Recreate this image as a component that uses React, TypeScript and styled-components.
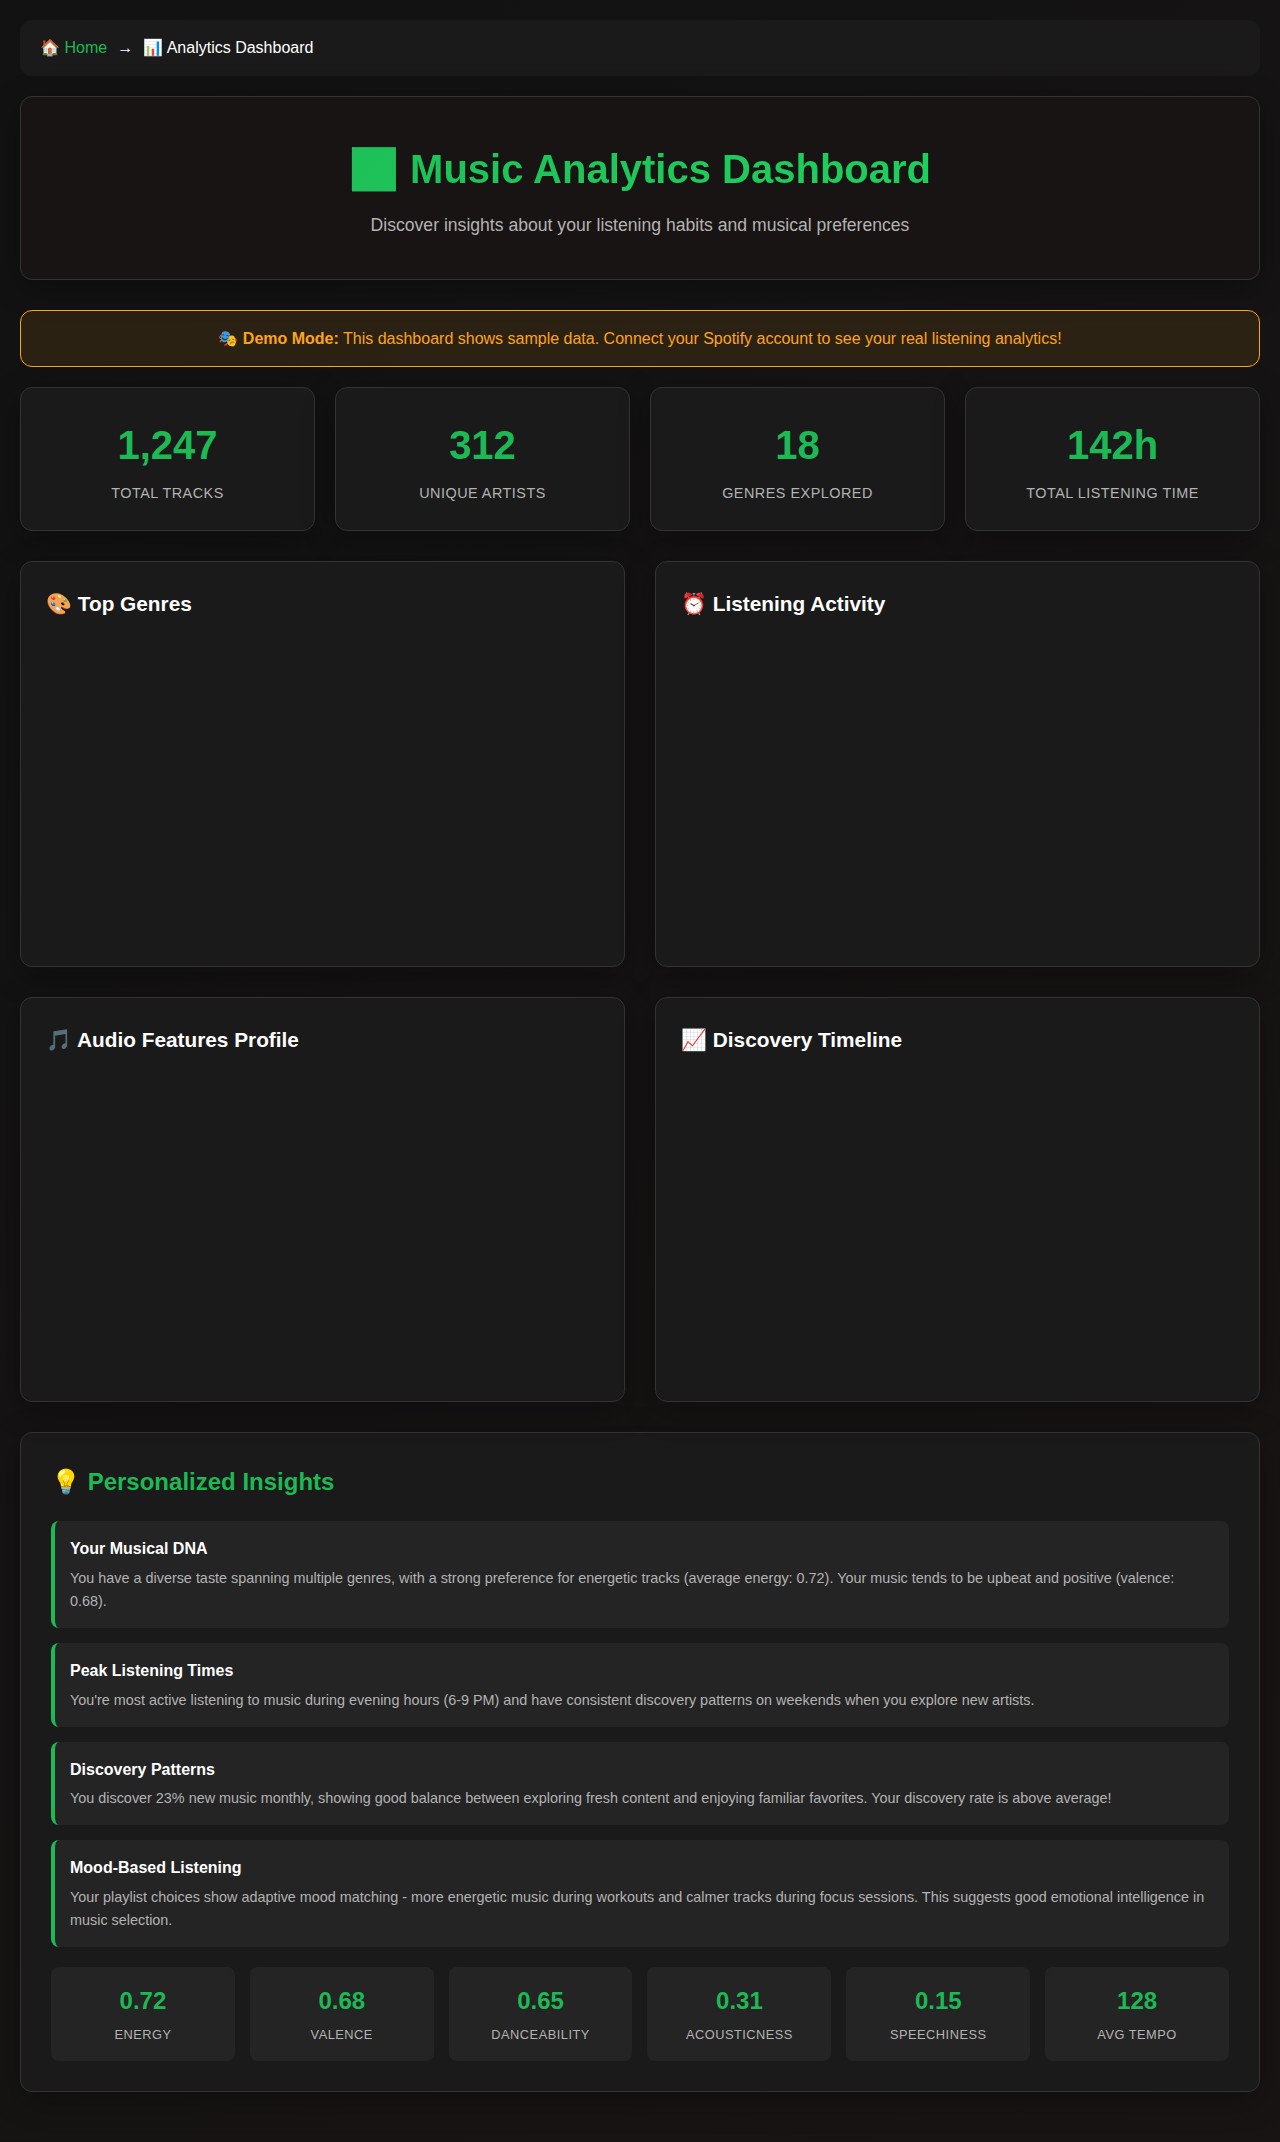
import React from "react";
import styled, { createGlobalStyle, css } from "styled-components";

const GlobalStyle = createGlobalStyle`
  * {
    margin: 0;
    padding: 0;
    box-sizing: border-box;
  }

  body {
    font-family: "Liberation Sans", Arial, sans-serif;
    font-size: 16px;
    line-height: 1.6;
    color: #ffffff;
    min-height: 100vh;
    background: linear-gradient(135deg, #121212 0%, #191414 100%);
  }
`;

const surface = css`
  background: #1a1a1a;
  border: 1px solid #333333;
  border-radius: 12px;
  box-shadow: 0 8px 32px rgba(0, 0, 0, 0.3);
`;

const Container = styled.div`
  max-width: 1400px;
  margin: 0 auto;
  padding: 20px 20px 50px;
`;

const Breadcrumb = styled.nav`
  display: flex;
  align-items: center;
  gap: 10px;
  padding: 15px 20px;
  margin-bottom: 20px;
  background: #1a1a1a;
  border-radius: 12px;
`;

const HomeLink = styled.a`
  color: #1db954;
  text-decoration: none;
`;

const Header = styled.header`
  ${surface}
  background: #191414;
  padding: 40px;
  margin-bottom: 30px;
  text-align: center;
`;

const Title = styled.h1`
  font-size: 40px;
  font-weight: 700;
  margin-bottom: 10px;
  background: linear-gradient(135deg, #1db954, #1ed760);
  -webkit-background-clip: text;
  background-clip: text;
  -webkit-text-fill-color: transparent;
`;

const Subtitle = styled.p`
  font-size: 17.6px;
  color: #b3b3b3;
`;

const Notice = styled.div`
  padding: 15px;
  margin-bottom: 20px;
  text-align: center;
  color: #ffa31a;
  background: rgba(255, 163, 26, 0.1);
  border: 1px solid #ffa31a;
  border-radius: 12px;
`;

const Stats = styled.section`
  display: grid;
  grid-template-columns: repeat(4, 1fr);
  gap: 20px;
  margin-bottom: 30px;
`;

const StatCard = styled.div`
  ${surface}
  padding: 25px;
  text-align: center;
`;

const StatValue = styled.div`
  font-size: 40px;
  font-weight: 700;
  color: #1db954;
  margin-bottom: 5px;
`;

const StatLabel = styled.div`
  font-size: 14.4px;
  letter-spacing: 0.5px;
  text-transform: uppercase;
  color: #b3b3b3;
`;

const Charts = styled.section`
  display: grid;
  grid-template-columns: repeat(2, 1fr);
  gap: 30px;
  margin-bottom: 30px;
`;

const ChartCard = styled.div`
  ${surface}
  padding: 25px;
`;

const ChartTitle = styled.h3`
  font-size: 20.8px;
  font-weight: 700;
  margin-bottom: 20px;
`;

const ChartArea = styled.div`
  height: 300px;
`;

const Insights = styled.section`
  ${surface}
  padding: 30px;
`;

const InsightsTitle = styled.h2`
  font-size: 24px;
  font-weight: 700;
  color: #1db954;
  margin-bottom: 20px;
`;

const InsightList = styled.div`
  display: flex;
  flex-direction: column;
  gap: 15px;
`;

const Insight = styled.article`
  padding: 15px;
  background: #242424;
  border-left: 4px solid #1db954;
  border-radius: 8px;
`;

const InsightTitle = styled.h4`
  font-size: 16px;
  font-weight: 700;
  margin-bottom: 5px;
`;

const InsightText = styled.p`
  font-size: 14.4px;
  color: #b3b3b3;
`;

const Features = styled.div`
  display: grid;
  grid-template-columns: repeat(6, 1fr);
  gap: 15px;
  margin-top: 20px;
`;

const Feature = styled.div`
  padding: 15px;
  text-align: center;
  background: #242424;
  border-radius: 8px;
`;

const FeatureValue = styled.div`
  font-size: 24px;
  font-weight: 700;
  color: #1db954;
  margin-bottom: 5px;
`;

const FeatureLabel = styled.div`
  font-size: 12.8px;
  letter-spacing: 0.5px;
  text-transform: uppercase;
  color: #b3b3b3;
`;

const stats = [
  { value: "1,247", label: "Total Tracks" },
  { value: "312", label: "Unique Artists" },
  { value: "18", label: "Genres Explored" },
  { value: "142h", label: "Total Listening Time" },
];

const charts = [
  "🎨 Top Genres",
  "⏰ Listening Activity",
  "🎵 Audio Features Profile",
  "📈 Discovery Timeline",
];

const insights = [
  {
    title: "Your Musical DNA",
    text: "You have a diverse taste spanning multiple genres, with a strong preference for energetic tracks (average energy: 0.72). Your music tends to be upbeat and positive (valence: 0.68).",
  },
  {
    title: "Peak Listening Times",
    text: "You're most active listening to music during evening hours (6-9 PM) and have consistent discovery patterns on weekends when you explore new artists.",
  },
  {
    title: "Discovery Patterns",
    text: "You discover 23% new music monthly, showing good balance between exploring fresh content and enjoying familiar favorites. Your discovery rate is above average!",
  },
  {
    title: "Mood-Based Listening",
    text: "Your playlist choices show adaptive mood matching - more energetic music during workouts and calmer tracks during focus sessions. This suggests good emotional intelligence in music selection.",
  },
];

const features = [
  { value: "0.72", label: "Energy" },
  { value: "0.68", label: "Valence" },
  { value: "0.65", label: "Danceability" },
  { value: "0.31", label: "Acousticness" },
  { value: "0.15", label: "Speechiness" },
  { value: "128", label: "Avg Tempo" },
];

export default function App() {
  return (
    <>
      <GlobalStyle />
      <Container>
        <Breadcrumb>
          <HomeLink href="#">🏠 Home</HomeLink>
          <span>→</span>
          <span>📊 Analytics Dashboard</span>
        </Breadcrumb>

        <Header>
          <Title>📊 Music Analytics Dashboard</Title>
          <Subtitle>
            Discover insights about your listening habits and musical preferences
          </Subtitle>
        </Header>

        <Notice>
          🎭 <strong>Demo Mode:</strong> This dashboard shows sample data. Connect your
          Spotify account to see your real listening analytics!
        </Notice>

        <Stats>
          {stats.map((s) => (
            <StatCard key={s.label}>
              <StatValue>{s.value}</StatValue>
              <StatLabel>{s.label}</StatLabel>
            </StatCard>
          ))}
        </Stats>

        <Charts>
          {charts.map((title) => (
            <ChartCard key={title}>
              <ChartTitle>{title}</ChartTitle>
              <ChartArea />
            </ChartCard>
          ))}
        </Charts>

        <Insights>
          <InsightsTitle>💡 Personalized Insights</InsightsTitle>
          <InsightList>
            {insights.map((i) => (
              <Insight key={i.title}>
                <InsightTitle>{i.title}</InsightTitle>
                <InsightText>{i.text}</InsightText>
              </Insight>
            ))}
          </InsightList>
          <Features>
            {features.map((f) => (
              <Feature key={f.label}>
                <FeatureValue>{f.value}</FeatureValue>
                <FeatureLabel>{f.label}</FeatureLabel>
              </Feature>
            ))}
          </Features>
        </Insights>
      </Container>
    </>
  );
}
